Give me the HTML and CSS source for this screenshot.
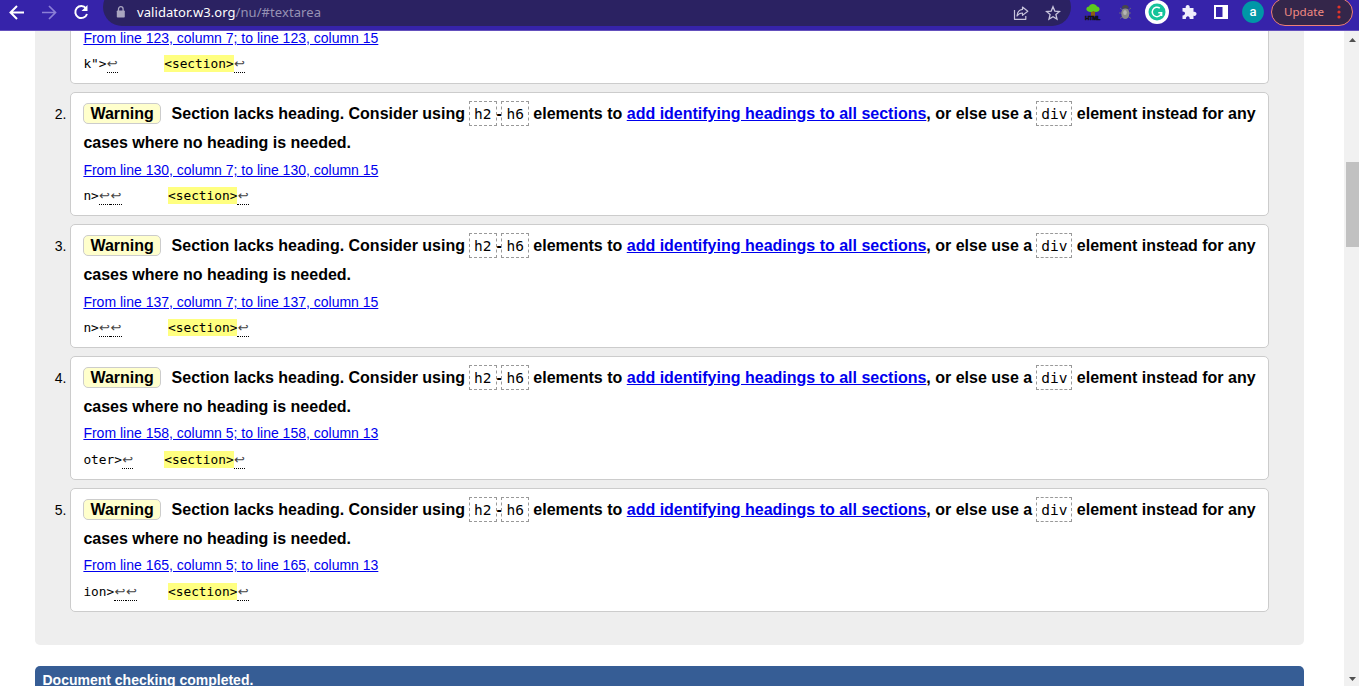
FILE: index.html
```html
<!DOCTYPE html>
<html lang="en">
<head>
<meta charset="utf-8">
<title>Nu Html Checker</title>
<link rel="stylesheet" href="styles.css">
</head>
<body>
<header class="toolbar">
  <svg class="nav" width="100" height="26" viewBox="0 0 100 26" fill="none" stroke="#fff" stroke-width="2">
    <path d="M24 12.500H11M17 6l-6.500 6.500L17 19"/>
    <path d="M42 12.500h13M49 6l6.500 6.500L49 19" stroke="#8b7fd6" stroke-width="1.700"/>
    <path d="M86 8.300A6 6 0 1 0 87 14"/><path d="M87.500 5v6h-6z" fill="#fff" stroke="none"/>
  </svg>
  <div class="address">
    <svg class="lock" width="10" height="12" viewBox="0 0 10 12"><path d="M2.500 5V3a2.300 2.300 0 0 1 4.600 0v2" fill="none" stroke="#aaa6c0" stroke-width="1.300"/><rect x=".8" y="4.500" width="8" height="7" rx=".8" fill="#aaa6c0"/></svg>
    <span class="url"><b>validator.w3.org</b>/nu/#textarea</span>
    <svg class="share" width="16" height="16" viewBox="0 0 16 16" fill="none" stroke="#c8c4dc" stroke-width="1.200"><path d="M1.500 5v9.300h11.300V11M9.500 2l5.300 4.200-5.300 4.200V8C7 8 5.300 9 4 11c.3-3.800 2.300-6.200 5.500-6.600z" stroke-linejoin="round"/></svg>
    <svg class="star" width="16" height="16" viewBox="0 0 16 16" fill="none" stroke="#c8c4dc" stroke-width="1.300"><path d="M8 1.800l1.800 4.300 4.700.4-3.600 3 1.100 4.600L8 11.700l-4 2.400 1.100-4.600-3.600-3 4.700-.4z"/></svg>
  </div>
  <svg class="extensions" width="194" height="28" viewBox="0 0 194 28">
    <!-- HTML tree -->
    <path d="M20 9h4v7h-4z" fill="#8c5b13"/>
    <path d="M16.500 11c-2-1.500-1-4.500 1.500-4.500.5-3.500 7-3.500 8 0 3 .5 3.500 4 1 5-2 .8-3.500.3-4.500-.5-2 1.500-4.500 1-6 0z" fill="#5cc91d"/>
    <text x="14" y="19.800" class="tree-label" textLength="15.500">HTML</text>
    <!-- beetle -->
    <path d="M49 8l2.500 2M60 8l-2.500 2M48 13h12M49 18.500l3-2M60 18.500l-3-2" stroke="#65617c" fill="none"/>
    <ellipse cx="54.300" cy="13.500" rx="4" ry="5.500" fill="#8b8b8b"/><path d="M50.800 8.500a3.500 3.500 0 0 1 7 0z" fill="#47474a"/>
    <ellipse cx="54" cy="12.500" rx="1.800" ry="2.500" fill="#b5b5b5"/>
    <!-- writing assistant -->
    <circle cx="86" cy="12" r="12" fill="#fff"/><circle cx="86" cy="12" r="8.500" fill="#15c39a"/>
    <path d="M88.800 8.200a4.700 4.700 0 1 0 1.800 4.500h-3.300M90.600 12.500v3.500" fill="none" stroke="#fff" stroke-width="1.500"/>
    <!-- puzzle -->
    <path d="M111.500 8h3.200c-.8-4 4.800-4 4 0h3.800v3.800c4-.8 4 4.800 0 4v3.200h-3.800c.4-3.800-4.200-3.800-3.800 0h-3.400v-3.600c3.400.2 3.400-4 0-3.800z" fill="#f0eefc"/>
    <!-- side panel -->
    <path d="M143 5h14v14h-14zM145 7v10h6.500V7z" fill="#fff" fill-rule="evenodd"/>
    <circle cx="182" cy="12" r="10.900" fill="#0097a7"/><text x="182" y="16" class="avatar">a</text>
  </svg>
  <div class="update">Update<svg width="4" height="14" viewBox="0 0 4 14" fill="#e0342b"><circle cx="2" cy="2" r="1.600"/><circle cx="2" cy="7" r="1.600"/><circle cx="2" cy="12" r="1.600"/></svg></div>
</header>
<div class="viewport">
<main>
  <ol class="results">
    <li class="row first"><span class="num"></span><div class="card">
      <p class="location"><a href="#l123">From line 123, column 7; to line 123, column 15</a></p>
      <p class="extract">k"&gt;<i class="lf">↩</i>      <mark>&lt;section&gt;</mark><i class="lf">↩</i></p>
    </div></li>
    <li class="row"><span class="num">2.</span><div class="card">
      <p class="message"><strong class="warning">Warning</strong><span>Section lacks heading. Consider using <code>h2</code>-<code>h6</code> elements to <a href="#h">add identifying headings to all sections</a>, or else use a <code>div</code> element instead for any<br>cases where no heading is needed.</span></p>
      <p class="location"><a href="#l130">From line 130, column 7; to line 130, column 15</a></p>
      <p class="extract">n&gt;<i class="lf">↩</i><i class="lf">↩</i>      <mark>&lt;section&gt;</mark><i class="lf">↩</i></p>
    </div></li>
    <li class="row"><span class="num">3.</span><div class="card">
      <p class="message"><strong class="warning">Warning</strong><span>Section lacks heading. Consider using <code>h2</code>-<code>h6</code> elements to <a href="#h">add identifying headings to all sections</a>, or else use a <code>div</code> element instead for any<br>cases where no heading is needed.</span></p>
      <p class="location"><a href="#l137">From line 137, column 7; to line 137, column 15</a></p>
      <p class="extract">n&gt;<i class="lf">↩</i><i class="lf">↩</i>      <mark>&lt;section&gt;</mark><i class="lf">↩</i></p>
    </div></li>
    <li class="row tight"><span class="num">4.</span><div class="card">
      <p class="message"><strong class="warning">Warning</strong><span>Section lacks heading. Consider using <code>h2</code>-<code>h6</code> elements to <a href="#h">add identifying headings to all sections</a>, or else use a <code>div</code> element instead for any<br>cases where no heading is needed.</span></p>
      <p class="location"><a href="#l158">From line 158, column 5; to line 158, column 13</a></p>
      <p class="extract">oter&gt;<i class="lf">↩</i>    <mark>&lt;section&gt;</mark><i class="lf">↩</i></p>
    </div></li>
    <li class="row tight"><span class="num">5.</span><div class="card">
      <p class="message"><strong class="warning">Warning</strong><span>Section lacks heading. Consider using <code>h2</code>-<code>h6</code> elements to <a href="#h">add identifying headings to all sections</a>, or else use a <code>div</code> element instead for any<br>cases where no heading is needed.</span></p>
      <p class="location"><a href="#l165">From line 165, column 5; to line 165, column 13</a></p>
      <p class="extract">ion&gt;<i class="lf">↩</i><i class="lf">↩</i>    <mark>&lt;section&gt;</mark><i class="lf">↩</i></p>
    </div></li>
  </ol>
  <p class="done">Document checking completed.</p>
</main>
<aside class="scrollbar">
  <svg width="15" height="17" viewBox="0 0 15 17"><path d="M5 11l3.500-4 3.500 4z" fill="#505050"/></svg>
  <div class="thumb"></div>
  <svg width="15" height="17" viewBox="0 0 15 17"><path d="M5 8l3.500 4L12 8z" fill="#505050"/></svg>
</aside>
</div>
</body>
</html>
```
FILE: styles.css
```css
* { box-sizing: border-box; }
body { margin: 0; height: 686px; overflow: hidden; background: #fff; font-family: "Liberation Sans", Arial, sans-serif; color: #000; }
p, ol { margin: 0; padding: 0; }
a { color: #0000ee; }

.toolbar { display: flex; height: 31px; background: #3623aa; border-bottom: 1px solid #6450bd; overflow: hidden; font-family: "Noto Sans", sans-serif; }
.nav { flex: none; margin-right: 3px; }
.address { display: flex; align-items: center; width: 968px; height: 38px; margin-top: -12px; padding: 11px 10px 0 13px; border-radius: 19px; background: #2b2262; }
.lock { margin-top: -2px; }
.url { flex: 1; margin-left: 11px; font-size: 13px; line-height: 18px; margin-top: -2px; letter-spacing: .07px; color: #9792b4; }
.url b { font-weight: 400; color: #fff; }
.share { margin-right: 16px; }
.extensions { flex: none; width: 194px; }
.tree-label { font: 900 6px "Liberation Sans", sans-serif; fill: #111; stroke: #111; stroke-width: .5px; }
.avatar { font: 500 13px Roboto, sans-serif; fill: #fff; text-anchor: middle; }
.update { display: flex; flex: none; align-items: center; justify-content: space-between; width: 82px; height: 28px; margin: -2px 0 0 6px; padding: 0 11px 1px 12px; border: 1px solid #ee7f77; border-radius: 14px; background: #34264a; color: #f28b82; font-size: 11.600px; }

.viewport { display: flex; height: 655px; }
main { flex: 1; padding: 0 40px 0 35px; overflow: hidden; }
.results { height: 614px; padding: 0 35px 0 0; background: #eee; border-radius: 0 0 5px 5px; list-style: none; }
.row { display: flex; height: 124px; margin-bottom: 8px; }
.num { flex: none; width: 35px; padding: 13px 3.500px 0 0; text-align: right; font-size: 14px; line-height: 18px; }
.card { flex: 1; padding: 6px 0 0 12.400px; background: #fff; border: 1px solid #ccc; border-radius: 5px; white-space: nowrap; }
.first { height: 53px; }
.first .card { padding-top: 0; border-top: 0; border-radius: 0 0 5px 5px; }
.message { height: 58px; font-size: 16px; font-weight: 700; line-height: 29px; }
.warning { display: inline-block; height: 21px; margin-right: 10.800px; padding: 0 6px; border: 1px solid #ccc; border-radius: 5px; background: #ffffcc; line-height: 19px; }
code { display: inline-block; height: 25px; margin: 0 0 -1px -.4px; padding: 0 4px; border: 1px dashed #999; font: 400 14.500px/25px "DejaVu Sans Mono", monospace; }
.location { height: 26px; font-size: 14px; line-height: 26px; }
.first .location { height: 20px; line-height: 14px; }
.tight .location { height: 26px; line-height: 24px; }
.extract { height: 25px; font: 12.800px/25px "DejaVu Sans Mono", monospace; white-space: pre; }
mark { display: inline-block; height: 17px; background: #ffff80; color: inherit; line-height: 17px; }
.lf { display: inline-block; width: 11.500px; height: 18px; border-bottom: 1px dotted #000; color: #444; font-style: normal; font-family: "DejaVu Sans", sans-serif; font-size: 13px; line-height: 17px; text-align: center; }
.done { height: 30px; margin-top: 21px; padding-left: 7.500px; border-radius: 5px 5px 0 0; background: #365d95; color: #fff; font-size: 14px; font-weight: 700; line-height: 28px; }

.scrollbar { display: flex; flex-direction: column; justify-content: space-between; width: 15px; background: #f1f1f1; }
.thumb { width: 13px; height: 85px; margin: 114px 0 auto 2px; background: #c1c1c1; }
```
